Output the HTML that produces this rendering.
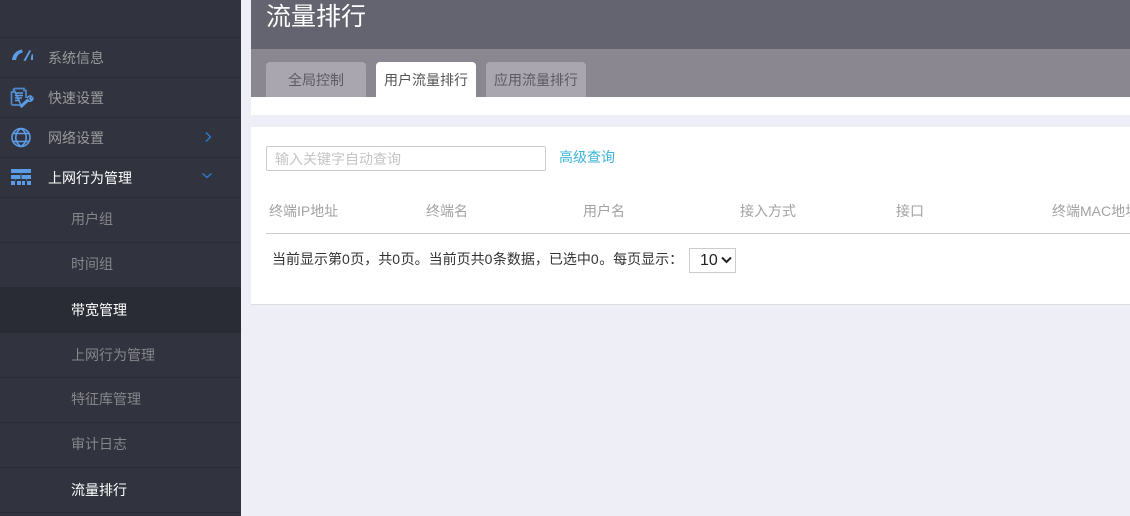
<!DOCTYPE html>
<html lang="zh">
<head>
<meta charset="utf-8">
<style>
html,body{margin:0;padding:0;width:1130px;height:516px;overflow:hidden;background:#eeeef6;font-family:"Liberation Sans","Noto Sans CJK SC",sans-serif;font-size:14px}
div,span,svg,input,select{position:absolute;box-sizing:border-box}
i{font-style:normal;letter-spacing:.5px}
.t{white-space:nowrap;line-height:20px}
#side{left:0;top:0;width:241px;height:516px;background:#31343e}
.ln{left:0;width:241px;height:1px;background:#2a2c35}
.m{left:48px;color:#9a9a9a}
.s{left:71px;color:#86868a}
.th{top:201px;color:#a2a2a2}
.tab{top:62px;width:100px;height:35px;border-radius:4px 4px 0 0;background:#aaa6b0;color:#5c5a60;text-align:center;line-height:36px}
</style>
</head>
<body>
<div id="side">
<div class="ln" style="top:37px"></div>
<div class="ln" style="top:77px"></div>
<div class="ln" style="top:117px"></div>
<div class="ln" style="top:157px"></div>
<div class="ln" style="top:197px"></div>
<div class="ln" style="top:242px"></div>
<div style="left:0;top:287px;width:241px;height:46px;background:#2a2c35"></div>
<div class="ln" style="top:377px"></div>
<div class="ln" style="top:422px"></div>
<div class="ln" style="top:467px"></div>
<div class="ln" style="top:512px"></div>

<svg style="left:10px;top:46px" width="24" height="20" viewBox="0 0 24 20" fill="#5c9ce6"><path d="M2 14C2.500 8.500 6 4.500 12 3.500L12.800 6.500C9 7.200 6.800 10 6 14Z"/><path d="M13.500 14.500L19.500 4L21 4.800L15.500 15Z"/><path d="M21 14C20.800 12 21 10 22 8L23 8.500V14Z"/></svg>
<svg style="left:10px;top:87px" width="24" height="22" viewBox="0 0 24 22" fill="none" stroke="#5087cc"><path d="M4.500 1.500H14V3.500H16V11M11 18H3C1.800 18 1.500 17 1.500 16V5H3.500V1.500Z" stroke-width="1.700"/><path d="M5 6H13M5 8.500H13M5 11H12M5 13.500H10" stroke-width="1.500" stroke="#5c9ce6"/><path d="M10.500 20L18.500 12.500" stroke-width="3" stroke="#5c9ce6"/><path d="M17.500 11C18 9 20.500 8.500 21.500 9.500L19.800 11.500L21 12.800L22.800 11C23 13.500 20.500 14.800 18.500 14" stroke-width="1.500" stroke="#5c9ce6"/></svg>
<svg style="left:11px;top:127px" width="20" height="21" viewBox="0 0 20 21" fill="none" stroke="#5c9ce6" stroke-width="1.600"><circle cx="10" cy="10.500" r="9"/><path d="M10 1.500C3 6 3 15 10 19.500C17 15 17 6 10 1.500Z"/><path d="M2.500 6.500H17.500M2.500 14.500H17.500"/></svg>
<svg style="left:11px;top:169px" width="20" height="17" viewBox="0 0 20 17" fill="#5c9ce6"><path d="M0 0H20V4H0ZM0 6H9.500V10H0ZM10.500 6H20V10H10.500ZM0 12H4V16H0ZM6 12H10V16H6ZM11 12H14V16H11ZM16 12H20V16H16Z"/><path d="M4 10H5V12H4ZM9.500 4H10.500V6H9.500ZM15 10H16V12H15Z" fill="#3e5f8c"/></svg>

<div class="t m" style="top:48px">系统信息</div>
<div class="t m" style="top:88px">快速设置</div>
<div class="t m" style="top:128px">网络设置</div>
<div class="t m" style="top:168px;color:#fff">上网行为管理</div>
<svg style="left:203px;top:131px" width="10" height="12" viewBox="0 0 10 12" fill="none" stroke="#2b7dd4" stroke-width="1.300"><path d="M3 1.500L7.500 6L3 10.500"/></svg>
<svg style="left:201px;top:171px" width="12" height="10" viewBox="0 0 12 10" fill="none" stroke="#2b7dd4" stroke-width="1.300"><path d="M1.500 2.500L6 6.500L10.500 2.500"/></svg>

<div class="t s" style="top:209px">用户组</div>
<div class="t s" style="top:254px">时间组</div>
<div class="t s" style="top:300px;color:#fff">带宽管理</div>
<div class="t s" style="top:345px">上网行为管理</div>
<div class="t s" style="top:389px">特征库管理</div>
<div class="t s" style="top:434px">审计日志</div>
<div class="t s" style="top:480px;color:#fff">流量排行</div>
</div>

<div style="left:251px;top:0;width:879px;height:49px;background:#636470"></div>
<div style="left:251px;top:49px;width:879px;height:48px;background:#8a8791"></div>
<div class="t" style="left:266px;top:2px;font-size:25px;line-height:30px;color:#fff">流量排行</div>
<div class="tab" style="left:266px">全局控制</div>
<div class="tab" style="left:376px;background:#fff;color:#555">用户流量排行</div>
<div class="tab" style="left:486px">应用流量排行</div>

<div style="left:251px;top:97px;width:879px;height:18px;background:#fff"></div>
<div style="left:251px;top:127px;width:879px;height:178px;background:#fff;border-bottom:1px solid #dcdcdc"></div>

<div style="left:266px;top:146px;width:280px;height:25px;border:1px solid #ccc;border-radius:2px"></div>
<div class="t" style="left:275px;top:149px;color:#c4c4c4">输入关键字自动查询</div>
<div class="t" style="left:559px;top:147px;color:#3db4d8">高级查询</div>

<div class="t th" style="left:269px">终端IP地址</div>
<div class="t th" style="left:426px">终端名</div>
<div class="t th" style="left:583px">用户名</div>
<div class="t th" style="left:740px">接入方式</div>
<div class="t th" style="left:896px">接口</div>
<div class="t th" style="left:1052px">终端MAC地址</div>
<div style="left:266px;top:233px;width:864px;height:1px;background:#ccc"></div>

<div class="t" style="left:272px;top:249px;color:#333">当前显示第<i>0</i>页，共<i>0</i>页。当前页共<i>0</i>条数据，已选中<i>0</i>。每页显示：</div>
<div style="left:689px;top:248px;width:47px;height:25px;border:1px solid #ccc"></div>
<div class="t" style="left:700px;top:251px;font-size:16px;color:#222">10</div>
<svg style="left:721px;top:256px" width="11" height="8" viewBox="0 0 11 8" fill="none" stroke="#222" stroke-width="2"><path d="M1 1.500L5.500 6L10 1.500"/></svg>
</body>
</html>
